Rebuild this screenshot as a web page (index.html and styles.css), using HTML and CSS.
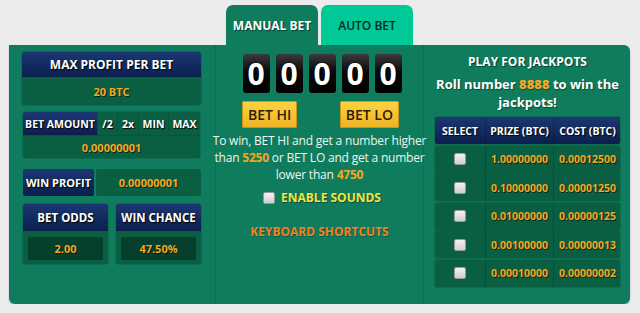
FILE: index.html
```html
<!DOCTYPE html>
<html lang="en">
<head>
    <meta charset="UTF-8">
    <meta name="viewport" content="width=device-width, initial-scale=1.0">
    <title>Dice - Manual Bet</title>
    <link rel="stylesheet" href="styles.css">
</head>
<body>
    <div class="game">
        <!-- abas de modo de aposta -->
        <div class="tabs">
            <div class="tab tab-active">MANUAL BET</div>
            <div class="tab tab-auto">AUTO BET</div>
        </div>

        <div class="panel">
            <!-- coluna da esquerda -->
            <div class="col col-left">
                <div class="box profit-box">
                    <div class="head">MAX PROFIT PER BET</div>
                    <div class="value">20 BTC</div>
                </div>

                <div class="box amount-box">
                    <div class="amount-row">
                        <div class="head amount-label">BET AMOUNT</div>
                        <div class="mini mini-half">/2</div>
                        <div class="mini mini-double">2x</div>
                        <div class="mini mini-min">MIN</div>
                        <div class="mini mini-max">MAX</div>
                    </div>
                    <div class="value">0.00000001</div>
                </div>

                <div class="win-profit">
                    <div class="head">WIN PROFIT</div>
                    <div class="value">0.00000001</div>
                </div>

                <div class="odds-row">
                    <div class="box odds-box">
                        <div class="head">BET ODDS</div>
                        <div class="odds-body"><div class="inner">2.00</div></div>
                    </div>
                    <div class="box odds-box">
                        <div class="head">WIN CHANCE</div>
                        <div class="odds-body"><div class="inner">47.50%</div></div>
                    </div>
                </div>
            </div>

            <!-- coluna do meio -->
            <div class="col col-mid">
                <div class="digits">
                    <span class="digit">0</span>
                    <span class="digit">0</span>
                    <span class="digit">0</span>
                    <span class="digit">0</span>
                    <span class="digit">0</span>
                </div>
                <div class="bet-buttons">
                    <button type="button" class="bet-btn">BET HI</button>
                    <button type="button" class="bet-btn">BET LO</button>
                </div>
                <p class="rules">To win, BET HI and get a number higher<br>than <b>5250</b> or BET LO and get a number<br>lower than <b>4750</b></p>
                <label class="sounds"><input type="checkbox" class="check"> ENABLE SOUNDS</label>
                <div class="shortcuts">KEYBOARD SHORTCUTS</div>
            </div>

            <!-- coluna da direita: jackpots -->
            <div class="col col-right">
                <div class="jp-title">PLAY FOR JACKPOTS</div>
                <p class="jp-text">Roll number <b>8888</b> to win the jackpots!</p>
                <div class="jp-table">
                    <div class="jp-row jp-head">
                        <div>SELECT</div>
                        <div>PRIZE (BTC)</div>
                        <div>COST (BTC)</div>
                    </div>
                    <div class="jp-row">
                        <div><input type="checkbox" class="check"></div>
                        <div>1.00000000</div>
                        <div>0.00012500</div>
                    </div>
                    <div class="jp-row">
                        <div><input type="checkbox" class="check"></div>
                        <div>0.10000000</div>
                        <div>0.00001250</div>
                    </div>
                    <div class="jp-row">
                        <div><input type="checkbox" class="check"></div>
                        <div>0.01000000</div>
                        <div>0.00000125</div>
                    </div>
                    <div class="jp-row">
                        <div><input type="checkbox" class="check"></div>
                        <div>0.00100000</div>
                        <div>0.00000013</div>
                    </div>
                    <div class="jp-row">
                        <div><input type="checkbox" class="check"></div>
                        <div>0.00010000</div>
                        <div>0.00000002</div>
                    </div>
                </div>
            </div>
        </div>
    </div>
</body>
</html>
```

FILE: styles.css
```css
body {
    margin: 0;
    padding: 0;
    font-family: "Open Sans", "DejaVu Sans", sans-serif;
    background: #ececec;
    color: #fff;
}

.game {
    padding: 5px 0 0 9px;
}

/*abas no topo*/
.tabs {
    display: flex;
    gap: 3px;
    margin-left: 217px;
}

.tab {
    width: 92px;
    height: 40px;
    border-radius: 7px 7px 0 0;
    display: flex;
    align-items: center;
    justify-content: center;
    font-size: 12px;
    font-weight: bold;
}

.tab-active {
    background: #0f7d5d;
    text-shadow: 1px 1px 1px rgba(0, 0, 0, 0.5);
}

.tab-auto {
    background: #00c896;
    color: #0b2a22;
    font-weight: 600;
}

/*quadro verde principal*/
.panel {
    width: 621px;
    height: 259px;
    background: #0f7d5d;
    border-radius: 0 6px 6px 6px;
    box-shadow: 0 1px 2px rgba(0, 0, 0, 0.25);
    display: grid;
    grid-template-columns: 206px 208px 207px;
}

.col-mid,
.col-right {
    border-left: 1px solid rgba(0, 0, 0, 0.12);
}

.head {
    background: linear-gradient(#1b3772, #0b1f4c);
    font-weight: bold;
    font-size: 11px;
    text-shadow: 1px 1px 1px #000;
    display: flex;
    align-items: center;
    justify-content: center;
    white-space: nowrap;
}

.value {
    background: #0a5f43;
    color: #f6a821;
    font-weight: bold;
    font-size: 11px;
    text-shadow: 1px 1px 0 rgba(0, 0, 0, 0.6);
    display: flex;
    align-items: center;
    justify-content: center;
}

b {
    color: #f6a821;
}

/*coluna esquerda*/
.col-left {
    padding: 7px 14px 0 13px;
}

.box {
    border-radius: 3px;
    overflow: hidden;
    background: #0a5f43;
    box-shadow: 0 0 0 1px rgba(0, 0, 0, 0.12);
}

.profit-box .head {
    height: 25px;
    font-size: 12px;
}

.profit-box .value {
    height: 28px;
}

.amount-box {
    margin: 7px 1px 0 1px;
    background: #08553c;
}

.amount-row {
    display: flex;
    height: 23px;
    gap: 1px;
    margin-bottom: 1px;
}

.amount-label {
    width: 74px;
    font-size: 10.5px;
}

.mini {
    background: #0a5f43;
    font-size: 10.5px;
    font-weight: bold;
    text-shadow: 1px 1px 1px #000;
    display: flex;
    align-items: center;
    justify-content: center;
}

.mini-half { width: 19px; }
.mini-double { width: 20px; }
.mini-min { width: 29px; }
.mini-max { flex: 1; }

.amount-box .value {
    height: 22px;
}

.win-profit {
    display: flex;
    gap: 2px;
    height: 27px;
    margin: 11px 0 0 1px;
}

.win-profit .head {
    width: 71px;
    border-radius: 2px;
}

.win-profit .value {
    flex: 1;
    border-radius: 2px;
}

.odds-row {
    display: flex;
    justify-content: space-between;
    margin: 8px 0 0 1px;
}

.odds-box {
    width: 85px;
    height: 60px;
}

.odds-box .head {
    height: 27px;
    font-size: 11.5px;
}

.odds-body {
    padding: 6px 5px 3px;
}

.inner {
    height: 23px;
    background: #063f2c;
    border-radius: 2px;
    color: #f6a821;
    font-weight: bold;
    font-size: 11px;
    text-shadow: 1px 1px 0 rgba(0, 0, 0, 0.6);
    display: flex;
    align-items: center;
    justify-content: center;
}

/*coluna do meio*/
.col-mid {
    display: flex;
    flex-direction: column;
    align-items: center;
    padding-top: 9px;
}

.digits {
    display: flex;
    gap: 6px;
    margin-left: 5px;
}

.digit {
    width: 27px;
    height: 39px;
    border-radius: 3px;
    background: linear-gradient(#3a3a3a, #0a0a0a 45%, #000);
    font-size: 30px;
    font-weight: bold;
    line-height: 39px;
    text-align: center;
    text-shadow: 0 0 2px #000, 1px 1px 0 #000;
}

.bet-buttons {
    display: flex;
    justify-content: space-between;
    width: 157px;
    margin: 8px 0 0 2px;
}

.bet-btn {
    height: 27px;
    padding: 0 5px;
    border: 1px solid #c9961c;
    border-radius: 1px;
    background: linear-gradient(#ffd23f, #eeb325);
    color: #2a2208;
    font-family: "Open Sans", sans-serif;
    font-size: 14px;
    font-weight: 600;
}

.rules {
    margin: 4px 0 0;
    font-size: 12px;
    letter-spacing: -0.2px;
    line-height: 17px;
    text-align: center;
    white-space: nowrap;
    color: #eef5f1;
}

.sounds {
    display: flex;
    align-items: center;
    gap: 6px;
    margin-top: 6px;
    margin-left: 5px;
    color: #f5e43a;
    font-size: 12px;
    font-weight: bold;
    text-shadow: 1px 1px 0 rgba(0, 0, 0, 0.4);
}

.check {
    appearance: none;
    margin: 0;
    width: 12px;
    height: 12px;
    border-radius: 2px;
    background: linear-gradient(#f2f2f2, #cfcfcf);
    border: 1px solid #9a9a9a;
}

.shortcuts {
    margin-top: 17px;
    color: #f67f22;
    font-size: 12px;
    font-weight: bold;
    text-shadow: 1px 1px 0 rgba(0, 0, 0, 0.3);
}

/*coluna direita - jackpots*/
.col-right {
    padding: 8px 10px 0 11px;
    text-align: center;
}

.jp-title {
    font-size: 12px;
    font-weight: bold;
    text-shadow: 1px 1px 1px rgba(0, 0, 0, 0.5);
}

.jp-text {
    margin: 5px -4px 0;
    font-size: 13px;
    font-weight: bold;
    line-height: 18px;
    text-shadow: 1px 1px 1px rgba(0, 0, 0, 0.4);
}

.jp-table {
    display: flex;
    flex-direction: column;
    gap: 1.5px;
    margin-top: 6px;
}

.jp-row {
    display: grid;
    grid-template-columns: 50px 68px 68px;
    height: 27px;
    background: #0a5f43;
    border-radius: 2px;
    box-shadow: 0 0 0 1px rgba(0, 0, 0, 0.12);
}

.jp-row div {
    display: flex;
    align-items: center;
    justify-content: center;
    color: #f6a821;
    font-size: 10.5px;
    font-weight: bold;
    text-shadow: 1px 1px 0 rgba(0, 0, 0, 0.6);
}

.jp-row div + div {
    border-left: 1px solid rgba(0, 0, 0, 0.18);
}

.jp-head {
    background: linear-gradient(#1b3772, #0b1f4c);
}

.jp-head div {
    color: #fff;
    font-size: 10.5px;
    text-shadow: 1px 1px 1px #000;
}
```
